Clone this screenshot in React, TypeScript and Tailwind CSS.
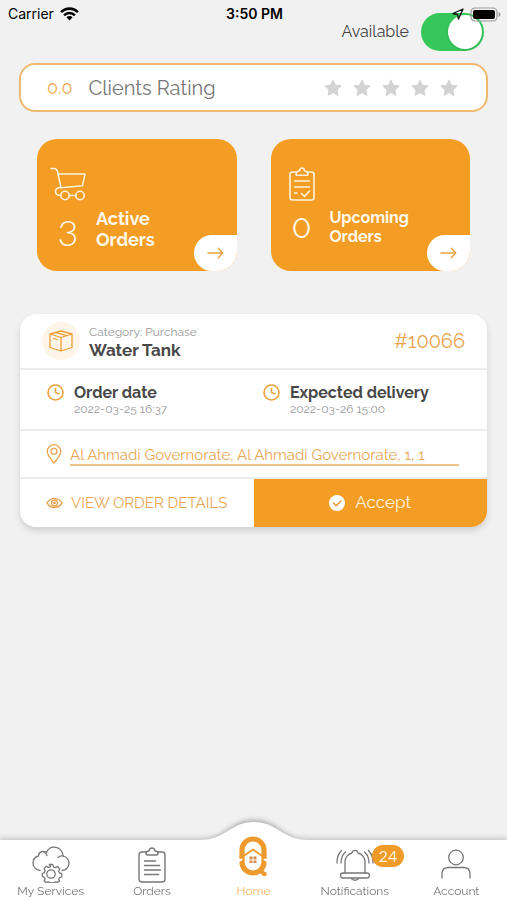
import React, { useState } from 'react';

const StarIcon = () => (
  <svg viewBox="0 0 24 24" className="w-[18px] h-[18px]" fill="#d3d3d3" stroke="#d3d3d3" strokeWidth="1.500" strokeLinejoin="round">
    <path d="M12 1.500l3.200 6.800 7.300.9-5.400 5.100 1.400 7.400L12 18.100l-6.500 3.600 1.400-7.400L1.500 9.200l7.300-.9z" />
  </svg>
);

const CartIcon = () => (
  <svg viewBox="0 0 36 34" className="w-9 h-[34px]" fill="none" stroke="#fff3dc" strokeWidth="1.500" strokeLinecap="round" strokeLinejoin="round">
    <path d="M1 1.500h3c2 0 3 1 3.500 3l3.500 16.200 21.500-2L35 7H8.500" />
    <path d="M11 20.500c-4 0-5.500 1.500-5.500 4s2 4 5.500 4M19 28.500h7" />
    <circle cx="15" cy="28.500" r="4.200" />
    <circle cx="30" cy="28.500" r="4.200" />
  </svg>
);

const ChecklistIcon = () => (
  <svg viewBox="0 0 26 34" className="w-[26px] h-[34px]" fill="none" stroke="#fff3dc" strokeWidth="1.600" strokeLinecap="round" strokeLinejoin="round">
    <path d="M7 5H3.500Q1 5 1 7.500v23Q1 33 3.500 33h19q2.500 0 2.500-2.500v-23Q25 5 22.500 5H19" />
    <path d="M7 7.500c0-2.500 1.500-3.500 3.500-3.500 0-1.800 1-3 2.500-3s2.500 1.200 2.500 3C17.500 4 19 5 19 7.500q0 .8-1 .8H8q-1 0-1-.8z" />
    <path d="M5.500 14h15M5.500 20h15M5.500 26H8M12.500 26.500l3 3 5-5.500" />
  </svg>
);

const ArrowIcon = () => (
  <svg viewBox="0 0 18 12" className="w-[17px] h-3" fill="none" stroke="#eda13c" strokeWidth="1.400" strokeLinecap="round" strokeLinejoin="round">
    <path d="M1 6h15.500M12 1l4.700 5L12 11" />
  </svg>
);

const BoxIcon = () => (
  <svg viewBox="0 0 24 22" className="w-6 h-[22px]" fill="none" stroke="#ed9f38" strokeWidth="1.300" strokeLinejoin="round" strokeLinecap="round">
    <path d="M1 4L12 1l11 3v13.500L12 21 1 17.500zM1 4l11 3.500L23 4M12 7.500V21M6.500 2.500l11 3.200M4.500 8.500l3.500 1" />
  </svg>
);

const ClockIcon = () => (
  <svg viewBox="0 0 17 17" className="w-[17px] h-[17px] shrink-0" fill="none" stroke="#eda13c" strokeWidth="1.600" strokeLinecap="round" strokeLinejoin="round">
    <circle cx="8.500" cy="8.500" r="7.500" />
    <path d="M8.500 4.500v4.300l3.300 1" />
  </svg>
);

const PinIcon = () => (
  <svg viewBox="0 0 16 20" className="w-4 h-5 shrink-0" fill="none" stroke="#e8a654" strokeWidth="1.300" strokeLinejoin="round">
    <path d="M8 19C4.500 14.500 1.200 11 1.200 7.500a6.800 6.800 0 0 1 13.600 0C14.800 11 11.500 14.500 8 19z" />
    <circle cx="8" cy="7.300" r="3" />
  </svg>
);

const EyeIcon = () => (
  <svg viewBox="0 0 18 12" className="w-[17px] h-3 shrink-0" fill="none" stroke="#e8a654" strokeWidth="1.400">
    <path d="M1 6c4.500-6.500 11.500-6.500 16 0-4.500 6.500-11.500 6.500-16 0z" />
    <circle cx="9" cy="6" r="3.200" />
    <circle cx="9" cy="6" r=".8" />
  </svg>
);

const ServicesIcon = () => (
  <svg viewBox="0 0 38 37" className="w-[38px] h-[37px]" fill="none" stroke="#777" strokeWidth="1.300" strokeLinecap="round" strokeLinejoin="round">
    <path d="M8 24.500C4 24 1 21 1 17.200c0-3.700 2.500-6.500 5.500-7.200C6.500 6 10.500 4 14.500 6.500 16 3 19 1 22.500 1.200c5 .2 8.500 4 8.700 8.800 3.500 1 5.800 4 5.800 7.500 0 3.700-3 6.700-7 7" />
    <path d="M11.500 6q3 1 3.500 3.500M31 10q-3-.5-5 1.500" />
    <path d="M17.300 18.500h3.400l.7 2.300 2 .8 2.100-1.100 2.300 2.400-1.100 2.100.8 1.900 2.300.8v3.300l-2.300.7-.8 2 .8 1.500-2 1.200-2.100-.5-2 1h-3.200l-2-1-2.100.5-2-1.700 1-1.700-.8-1.700-2-.8v-3l2-.8.8-2-1-2.100 2.300-2.300 2.100 1 2-.7z" />
    <circle cx="19" cy="28" r="4.200" />
  </svg>
);

const OrdersIcon = () => (
  <svg viewBox="0 0 28 36" className="w-7 h-9" fill="none" stroke="#777" strokeWidth="1.400" strokeLinecap="round" strokeLinejoin="round">
    <path d="M8 5H4Q1 5 1 8v24q0 3 3 3h20q3 0 3-3V8q0-3-3-3h-4" />
    <path d="M8 6.500Q8 4 11 4q.5-3 3-3t3 3q3 0 3 2.500Q20 8 18 8h-8q-2 0-2-1.500zM6.500 14h11M6.500 18.500h15M6.500 23h16M6.500 27.500h14" />
  </svg>
);

const HomeLogo = () => (
  <svg viewBox="0 0 30 42" className="w-[30px] h-[42px]" fill="none">
    <rect x="4" y="4" width="22" height="34" rx="11" stroke="#ed992d" strokeWidth="5.200" />
    <path d="M0 26.500l4-3M30 26.500l-4-3" stroke="#fff" strokeWidth="2.500" />
    <path d="M2 23.500l13-9 13 9" stroke="#ed992d" strokeWidth="1.800" />
    <path d="M21 34l5 5" stroke="#ed992d" strokeWidth="4" />
    <circle cx="26.500" cy="39" r="2.300" fill="#ed992d" />
    <path d="M11.500 21.500h3v3h-3zM15.500 21.500h3v3h-3zM11.500 25.500h3V28h-3zM15.500 25.500h3V28h-3z" fill="#d98b45" />
  </svg>
);

const BellIcon = () => (
  <svg viewBox="0 0 38 32" className="w-[38px] h-8" fill="none" stroke="#777" strokeWidth="1.300" strokeLinecap="round" strokeLinejoin="round">
    <path d="M9 24V13c0-4.500 3-8 7-9 .3-1.600 1.400-2.700 3-2.700s2.700 1.100 3 2.700c4 1 7 4.500 7 9v11" />
    <path d="M7 24h24q2.500 0 2.500 2.500T31 29H7q-2.500 0-2.500-2.500T7 24zM15.500 29c.5 3 6.500 3 7 0" />
    <path d="M9.500 3C6.500 5.500 5 9 5 14M5.500 1.500C2.500 4.500 1 9 1 14M28.500 3c3 2.500 4.500 6 4.500 11M32.500 1.500C35.500 4.500 37 9 37 14" />
  </svg>
);

const AccountIcon = () => (
  <svg viewBox="0 0 30 30" className="w-[30px] h-[30px]" fill="none" stroke="#777" strokeWidth="1.300" strokeLinecap="round">
    <circle cx="15" cy="8.500" r="7.300" />
    <path d="M1 29v-4q0-6.500 6.500-6.500h15q6.500 0 6.500 6.500v4" />
  </svg>
);

const StatusBar = () => (
  <div className="absolute inset-x-0 top-0 z-10 grid grid-cols-3 items-center h-7 pl-2 pr-1.5 text-black font-['Inter',sans-serif] pointer-events-none">
    <div className="flex items-center gap-1.5 text-sm">
      Carrier
      <svg viewBox="0 0 20 15" className="w-[19px] h-3.5" fill="none" stroke="#000" strokeWidth="2.700">
        <path d="M1 5.500c5-5 13-5 18 0M4.200 9c3.200-3.300 8.400-3.300 11.600 0" />
        <path d="M10 14.500l-3.300-3.400c1.900-1.800 4.700-1.800 6.600 0z" fill="#000" stroke="none" />
      </svg>
    </div>
    <div className="text-center text-sm font-semibold">3:50 PM</div>
    <div className="flex items-center justify-end gap-1.5">
      <svg viewBox="0 0 12 12" className="w-3 h-3" fill="none" stroke="#111" strokeWidth="1.300" strokeLinejoin="round">
        <path d="M11 1L1 5.500l4.500 1L6.500 11z" />
      </svg>
      <svg viewBox="0 0 31 15" className="w-[31px] h-[15px]">
        <rect x="1" y="1" width="26" height="13" rx="4" fill="none" stroke="#999" strokeWidth="1.200" />
        <rect x="3" y="3" width="22" height="9" rx="2" />
        <path d="M28.500 5v5q2-.8 2-2.500T28.500 5z" fill="#999" />
      </svg>
    </div>
  </div>
);

const summaryCards = [
  {
    icon: CartIcon,
    count: '3',
    title: 'Active',
    rowClass: 'h-14',
    countClass: "pt-1.5 text-4xl font-light font-['Lato',sans-serif]",
    titleClass: 'text-lg leading-[21px]',
  },
  {
    icon: ChecklistIcon,
    count: '0',
    title: 'Upcoming',
    rowClass: 'h-[52px]',
    countClass: 'pt-1 text-[28px] font-normal lining-nums',
    titleClass: 'text-base leading-[19px]',
  },
];

const dates = [
  { label: 'Order date', value: '2022-03-25 16:37' },
  { label: 'Expected delivery', value: '2022-03-26 15:00' },
];

const navItems = [
  { label: 'My Services', icon: ServicesIcon, iconClass: 'mb-0' },
  { label: 'Orders', icon: OrdersIcon, iconClass: 'mb-0' },
  { label: 'Home', icon: HomeLogo, iconClass: 'mb-1.5', active: true },
  { label: 'Notifications', icon: BellIcon, iconClass: 'mb-0.5', badge: 24 },
  { label: 'Account', icon: AccountIcon, iconClass: 'mb-1' },
];

const App: React.FC = () => {
  const [available, setAvailable] = useState(true);

  return (
    <div className="relative flex flex-col min-h-screen bg-[#f1f1f1] text-[#777] font-['Raleway','Lato',sans-serif]">
      <StatusBar />

      <header className="flex justify-end pt-[13px] pr-[23px]">
        <label className="flex items-center gap-3 text-base text-[#444] cursor-pointer">
          Available
          <input
            type="checkbox"
            role="switch"
            checked={available}
            onChange={(e) => setAvailable(e.target.checked)}
            className="peer sr-only"
          />
          <span className="flex items-center w-[63px] h-[38px] p-0.5 rounded-full bg-gray-300 peer-checked:bg-[#35c75a] peer-checked:justify-end">
            <span className="w-[34px] h-[34px] rounded-full bg-white shadow-sm" />
          </span>
        </label>
      </header>

      <main className="flex-1 px-[19px] pt-3 pb-20">
        {/* Rating */}
        <section className="flex items-center h-[49px] pl-[26px] pr-7 bg-white border-2 border-[#f0b970] rounded-2xl">
          <span className="text-lg text-[#efaa50]">0.0</span>
          <h2 className="ml-4 text-xl">Clients Rating</h2>
          <div className="flex gap-[11px] ml-auto">
            {[1, 2, 3, 4, 5].map((star) => (
              <StarIcon key={star} />
            ))}
          </div>
        </section>

        {/* Order counters */}
        <section className="grid grid-cols-2 gap-[34px] px-[18px] pt-[27px]">
          {summaryCards.map((card) => (
            <button
              key={card.title}
              className="relative flex flex-col h-[132px] pt-7 pl-[13px] overflow-hidden text-left text-[#fff8ea] bg-[#f49d25] rounded-[20px]"
            >
              <span className="flex justify-center w-9">
                <card.icon />
              </span>
              <span className={`flex items-center ${card.rowClass}`}>
                <span className={`w-9 text-center ${card.countClass}`}>{card.count}</span>
                <span className={`ml-2.5 font-bold ${card.titleClass}`}>
                  {card.title}
                  <br />
                  Orders
                </span>
              </span>
              <span className="absolute right-0 bottom-0 flex items-center justify-center w-[43px] h-9 bg-white rounded-l-[20px]">
                <ArrowIcon />
              </span>
            </button>
          ))}
        </section>

        {/* Current order */}
        <article className="mt-[43px] mx-px overflow-hidden bg-white rounded-2xl shadow-[0_4px_6px_rgba(0,0,0,0.13)]">
          <div className="flex items-center h-14 px-[22px] border-b-2 border-[#ececec]">
            <span className="flex items-center justify-center w-[38px] h-[38px] rounded-full bg-[#fef5e8]">
              <BoxIcon />
            </span>
            <div className="ml-[9px] pt-0.5">
              <p className="text-xs leading-4 text-[#999]">Category: Purchase</p>
              <h3 className="text-[17px] leading-5 font-bold text-[#484848]">Water Tank</h3>
            </div>
            <span className="ml-auto text-xl text-[#eaa34a]">#10066</span>
          </div>

          <div className="grid grid-cols-2 h-[61px] pt-3.5 pl-[27px] pr-2 border-b-2 border-[#ececec]">
            {dates.map((date) => (
              <div key={date.label} className="flex gap-2.5">
                <ClockIcon />
                <div>
                  <h4 className="text-base leading-[17px] font-bold text-[#484848]">{date.label}</h4>
                  <p className="text-xs leading-4 text-[#999]">{date.value}</p>
                </div>
              </div>
            ))}
          </div>

          <div className="flex items-center gap-2 h-12 pl-[26px] pr-7 border-b-2 border-[#ececec]">
            <PinIcon />
            <a href="#map" className="flex-1 pt-1 text-[15px] leading-[18px] text-[#e8a654] border-b-2 border-[#efc48a]">
              Al Ahmadi Governorate, Al Ahmadi Governorate, 1, 1
            </a>
          </div>

          <div className="grid grid-cols-2 h-12">
            <button className="flex items-center gap-2 pl-[26px] text-[15px] text-[#e8a654] whitespace-nowrap">
              <EyeIcon />
              VIEW ORDER DETAILS
            </button>
            <button className="flex items-center justify-center gap-2.5 text-[17px] text-[#fff3dc] bg-[#f49d25]">
              <svg viewBox="0 0 16 16" className="w-4 h-4" fill="none">
                <circle cx="8" cy="8" r="8" fill="#fff" />
                <path d="M4.500 8l2.700 2.700 4.500-4.500" stroke="#e99b35" strokeWidth="1.600" strokeLinecap="round" strokeLinejoin="round" />
              </svg>
              Accept
            </button>
          </div>
        </article>
      </main>

      {/* Bottom navigation */}
      <nav className="fixed inset-x-0 bottom-0 h-[60px] flex flex-col justify-end bg-white shadow-[0_-2px_5px_rgba(0,0,0,0.18)]">
        <svg viewBox="0 0 120 28" className="absolute left-1/2 -translate-x-1/2 -top-[26px] w-[120px] h-7 overflow-visible" fill="none">
          <defs>
            <filter id="bump-shadow" x="-10%" y="-50%" width="120%" height="200%">
              <feGaussianBlur stdDeviation="2.500" />
            </filter>
          </defs>
          <path d="M8 26C30 26 36 6 60 6s30 20 52 20z" fill="#000" fillOpacity=".3" filter="url(#bump-shadow)" />
          <path d="M0 40V26h6C32 26 36 8 60 8s28 18 54 18h6v14z" fill="#fff" />
        </svg>
        <div className="relative grid grid-cols-5">
          {navItems.map((item) => (
            <a
              key={item.label}
              href={`#${item.label.toLowerCase().replace(' ', '-')}`}
              className={`flex flex-col items-center justify-end pb-px text-xs leading-4 ${
                item.active ? 'text-[#efb263]' : 'text-[#777]'
              }`}
            >
              <span className={`relative flex items-end ${item.iconClass}`}>
                <item.icon />
                {item.badge && (
                  <span className="absolute left-9 -top-1 flex items-center justify-center w-8 h-[22px] text-base font-['Lato',sans-serif] text-[#fff3dc] bg-[#f09a27] rounded-full">
                    {item.badge}
                  </span>
                )}
              </span>
              {item.label}
            </a>
          ))}
        </div>
      </nav>
    </div>
  );
};

export default App;
